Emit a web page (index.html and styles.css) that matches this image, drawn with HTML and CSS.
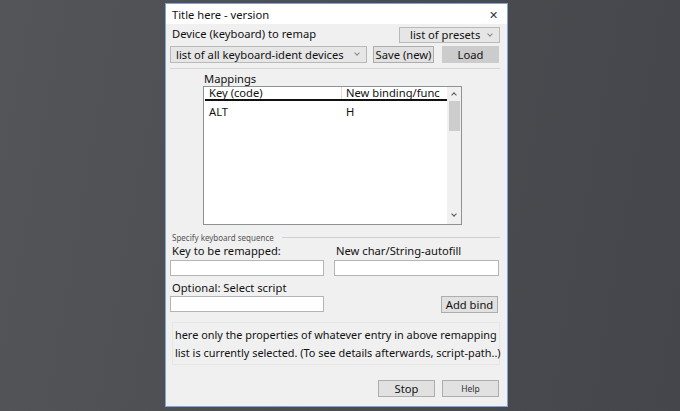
FILE: index.html
```html
<!DOCTYPE html>
<html lang="en">
<head>
  <meta charset="UTF-8" />
  <meta name="viewport" content="width=device-width, initial-scale=1.0"/>
  <title>Title here - version</title>
  <link rel="stylesheet" href="styles.css">
</head>
<body>
  <div class="window">
    <div class="titlebar">
      <span>Title here - version</span>
      <span class="close">&#x2715;</span>
    </div>

    <div class="content">
      <div class="row row-device">
        <span class="label">Device (keyboard) to remap</span>
        <div class="select presets">list of presets<span class="chev"></span></div>
      </div>

      <div class="row row-actions">
        <div class="select devices">list of all keyboard-ident devices<span class="chev"></span></div>
        <button class="btn save">Save (new)</button>
        <button class="btn load">Load</button>
      </div>

      <div class="separator"></div>

      <div class="mappings">
        <div class="mappings-title">Mappings</div>
        <div class="listbox">
          <div class="list-main">
            <div class="list-head">
              <span class="col-key">Key (code)</span>
              <span class="col-bind">New binding/func</span>
            </div>
            <div class="list-row">
              <span class="col-key">ALT</span>
              <span class="col-bind">H</span>
            </div>
          </div>
          <div class="scrollbar">
            <span class="arrow up"></span>
            <span class="thumb"></span>
            <span class="arrow down"></span>
          </div>
        </div>
      </div>

      <div class="group-legend">
        <span>Specify keyboard sequence</span>
        <span class="legend-line"></span>
      </div>

      <div class="fields">
        <label class="field-label">Key to be remapped:</label>
        <label class="field-label">New char/String-autofill</label>
        <div class="input"></div>
        <div class="input"></div>
        <label class="field-label script-label">Optional: Select script</label>
        <span></span>
        <div class="input"></div>
        <div class="bind-cell"><button class="btn bind">Add bind</button></div>
      </div>

      <div class="info">
        here only the properties of whatever entry in above remapping<br>
        list is currently selected. (To see details afterwards, script-path..)
      </div>

      <div class="footer">
        <button class="btn">Stop</button>
        <button class="btn help">Help</button>
      </div>
    </div>
  </div>
</body>
</html>
```

FILE: styles.css
```css
body {
  margin: 0;
  height: 411px;
  overflow: hidden;
  background: linear-gradient(100deg, #545558 0%, #4b4c50 55%, #44464b 100%);
  font-family: 'Noto Sans', 'Open Sans', sans-serif;
  font-size: 11.2px;
  color: #111;
}

.window {
  margin: 3px 0 0 165px;
  width: 341px;
  height: 402px;
  border: 1px solid #7fa5d6;
  background: #f0f0f0;
}

.titlebar {
  height: 20px;
  background: #fff;
  display: flex;
  align-items: center;
  justify-content: space-between;
  padding: 0 9px 0 6px;
}

.close {
  font-size: 11px;
  color: #333;
}

.content {
  padding: 0 7px 0 4px;
}

.row {
  display: flex;
  align-items: center;
}

.row-device {
  height: 19px;
  justify-content: space-between;
}

.label {
  padding-left: 2px;
}

.select {
  box-sizing: border-box;
  height: 16px;
  border: 1px solid #b9b9b9;
  background: #e6e6e6;
  display: flex;
  align-items: center;
  padding-left: 6px;
  position: relative;
  line-height: 14px;
  white-space: nowrap;
}

.chev {
  position: absolute;
  right: 7px;
  top: 4px;
  width: 3px;
  height: 3px;
  border-right: 1px solid #888;
  border-bottom: 1px solid #888;
  transform: rotate(45deg);
}

.presets {
  width: 101px;
  margin-top: 3px;
  padding-left: 10px;
}

.row-actions {
  margin-top: 3px;
  height: 17px;
}

.devices {
  width: 197px;
  height: 17px;
  padding-left: 5px;
}

.btn {
  box-sizing: border-box;
  height: 17px;
  width: 57px;
  padding: 0;
  border: 1px solid #adadad;
  background: #e1e1e1;
  font-family: inherit;
  font-size: 11.2px;
  line-height: 14px;
  color: #111;
  white-space: nowrap;
}

.save {
  width: 61px;
  margin-left: 6px;
}

.load {
  margin-left: 8px;
  background: #cccccc;
  border-color: #cccccc;
}

.separator {
  margin-top: 5px;
  height: 1px;
  background: #d5d5d5;
}

.mappings {
  padding-left: 33px;
}

.mappings-title {
  height: 14px;
  line-height: 14px;
  margin-top: 3px;
  padding-left: 1px;
}

.listbox {
  box-sizing: border-box;
  width: 259px;
  height: 139px;
  border: 1px solid #8e9196;
  background: #fff;
  display: flex;
}

.list-main {
  flex: 1;
}

.list-head {
  display: flex;
  height: 12px;
  line-height: 12px;
  border-bottom: 2px solid #111;
  margin-left: 1px;
}

.list-head .col-bind {
  border-left: 1px solid #ddd;
  padding-left: 4px;
}

.col-key {
  width: 132px;
  padding-left: 4px;
}

.list-row {
  display: flex;
  height: 21px;
  line-height: 21px;
  margin-left: 1px;
}

.list-row .col-bind {
  padding-left: 5px;
}

.scrollbar {
  width: 14px;
  background: #f0f0f0;
  display: flex;
  flex-direction: column;
  align-items: center;
}

.arrow {
  width: 3px;
  height: 3px;
  border-left: 1px solid #555;
  border-top: 1px solid #555;
  transform: rotate(45deg);
  margin-top: 6px;
}

.arrow.down {
  transform: rotate(225deg);
  margin-top: auto;
  margin-bottom: 8px;
}

.thumb {
  width: 11px;
  height: 30px;
  margin-top: 4px;
  background: #cdcdcd;
}

.group-legend {
  display: flex;
  align-items: center;
  margin-top: 7px;
  height: 10px;
  font-size: 8px;
  color: #555;
  padding-left: 2px;
}

.legend-line {
  flex: 1;
  height: 1px;
  background: #d0d0d0;
  margin-left: 8px;
}

.fields {
  display: grid;
  grid-template-columns: 154px 165px;
  column-gap: 10px;
  margin-top: 2px;
}

.field-label {
  height: 14px;
  line-height: 14px;
  padding-left: 2px;
  margin-bottom: 2px;
}

.script-label {
  margin-top: 5px;
  margin-bottom: 1px;
}

.input {
  box-sizing: border-box;
  height: 16px;
  border: 1px solid #b5b5b5;
  background: #fff;
}

.bind-cell {
  display: flex;
  justify-content: flex-end;
  align-items: flex-end;
}

.bind {
  margin-right: 1px;
}

.info {
  margin: 9px 0 0 2px;
  box-sizing: border-box;
  height: 43px;
  border: 1px solid #e6e6e6;
  padding: 3px 0 0 2px;
  line-height: 18px;
  font-size: 10.9px;
  white-space: nowrap;
}

.footer {
  margin-top: 15px;
  display: flex;
  justify-content: flex-end;
  gap: 7px;
  padding-right: 1px;
}

.help {
  font-size: 8.5px;
  color: #333;
}
```
